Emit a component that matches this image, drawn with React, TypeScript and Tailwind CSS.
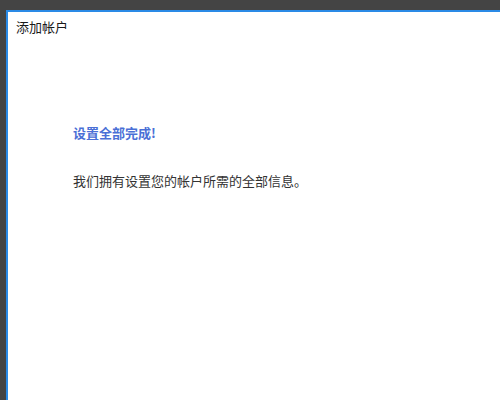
import React from 'react';

const App = () => {
  return (
    <div
      className="flex h-[400px] w-[500px] flex-col bg-[#444444] pl-[6px] pt-[10px]"
      style={{ fontFamily: '"Microsoft YaHei", "Noto Sans CJK SC", sans-serif' }}
    >
      {/* window */}
      <div className="flex flex-1 flex-col border-l-2 border-t-2 border-[#2a8ae6] bg-white">
        <div className="pl-[8px] pt-[7px] text-[13px] leading-[16px] text-[#1a1a1a]">添加帐户</div>
        <div className="pl-[65px] pt-[90px]">
          <div className="text-[13px] font-bold leading-[16px] text-[#4a6fd6]">设置全部完成!</div>
          <div className="pt-[32px] text-[13px] leading-[16px] text-[#333333]">
            我们拥有设置您的帐户所需的全部信息。
          </div>
        </div>
      </div>
    </div>
  );
};

export default App;
